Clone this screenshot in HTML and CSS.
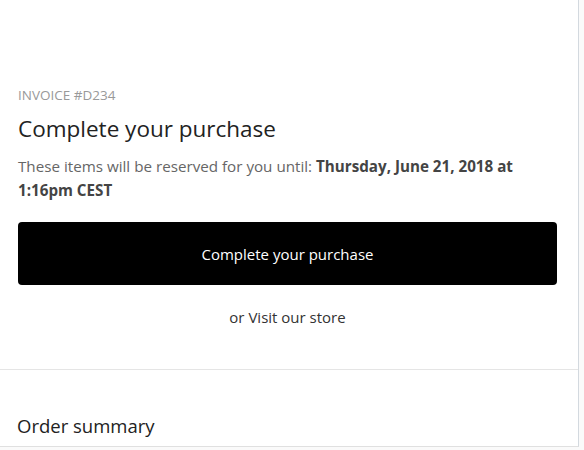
FILE: index.html
```html
<!DOCTYPE html>
<html>
<head>
<meta charset="utf-8">
<link rel="stylesheet" href="styles.css">
</head>
<body>
<div class="card">
  <section class="checkout">
    <div class="invoice">INVOICE #D234</div>
    <h1 class="title">Complete your purchase</h1>
    <p class="note">These items will be reserved for you until: <strong>Thursday, June 21, 2018 at 1:16pm CEST</strong></p>
    <a class="button" href="#">Complete your purchase</a>
    <div class="store">or <a href="#">Visit our store</a></div>
  </section>
  <section class="summary">
    <h2 class="summary-title">Order summary</h2>
  </section>
</div>
</body>
</html>
```

FILE: styles.css
```css
html, body {
  margin: 0;
  padding: 0;
  background: #fafafa;
  height: 100%;
}
body {
  font-family: "Open Sans", "Noto Sans", sans-serif;
  color: #333;
}
.card {
  background: #fff;
  border-right: 1px solid #d3d9df;
  border-bottom: 1px solid #e0e0e0;
  box-sizing: border-box;
  width: 579px;
}
.checkout {
  padding: 85px 21px 0 18px;
  height: 370px;
  box-sizing: border-box;
  border-bottom: 1px solid #e5e5e5;
}
.invoice {
  font-size: 13.5px;
  color: #999;
  line-height: 20px;
}
.title {
  margin: 8px 0 0;
  font-size: 22.5px;
  font-weight: 400;
  color: #222;
  line-height: 32px;
}
.note {
  margin: 9px 0 0;
  font-size: 15.2px;
  line-height: 24px;
  color: #666;
}
.note strong {
  color: #444;
  font-weight: 700;
}
.button {
  display: flex;
  align-items: center;
  justify-content: center;
  margin-top: 20px;
  height: 63px;
  background: #000;
  color: #fff;
  border-radius: 4px;
  text-decoration: none;
  font-size: 15px;
}
.store {
  text-align: center;
  margin-top: 20px;
  font-size: 15px;
  line-height: 24px;
  color: #333;
}
.store a {
  color: #333;
  text-decoration: none;
}
.summary {
  padding: 41px 18px 0 17px;
  height: 76px;
  box-sizing: border-box;
}
.summary-title {
  margin: 0;
  font-size: 18.5px;
  font-weight: 400;
  color: #222;
  line-height: 30px;
}
```
